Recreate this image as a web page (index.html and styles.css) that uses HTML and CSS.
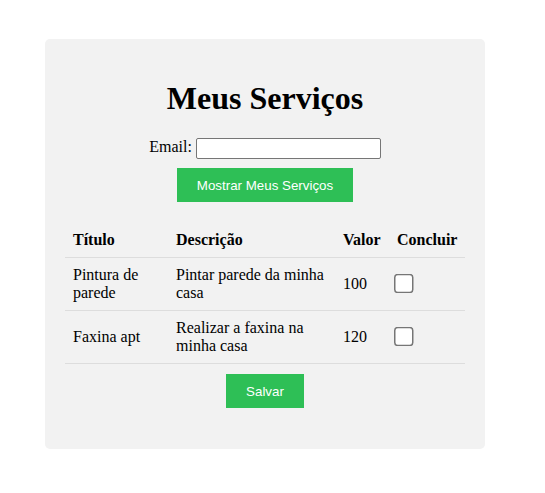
FILE: index.html
```html
<!DOCTYPE html>
<html lang="pt-BR">
<head>
  <meta charset="UTF-8">
  <meta name="viewport" content="width=device-width, initial-scale=1.0">
  <title>Meus Serviços</title>
  <link rel="stylesheet" href="styles.css">
</head>
<body>
  <div class="container">
    <h1>Meus Serviços</h1>
    <div class="email-row">
      <label for="email">Email:</label>
      <input type="email" id="email">
    </div>
    <div class="actions">
      <button>Mostrar Meus Serviços</button>
    </div>
    <table>
      <thead>
        <tr>
          <th class="col-titulo">Título</th>
          <th class="col-desc">Descrição</th>
          <th class="col-valor">Valor</th>
          <th class="col-concluir">Concluir</th>
        </tr>
      </thead>
      <tbody>
        <tr>
          <td>Pintura de parede</td>
          <td>Pintar parede da minha casa</td>
          <td>100</td>
          <td><input type="checkbox"></td>
        </tr>
        <tr>
          <td>Faxina apt</td>
          <td>Realizar a faxina na minha casa</td>
          <td>120</td>
          <td><input type="checkbox"></td>
        </tr>
      </tbody>
    </table>
    <div class="actions save">
      <button>Salvar</button>
    </div>
  </div>
</body>
</html>
```

FILE: styles.css
```css
body {
  font-family: "Liberation Serif", "Times New Roman", serif;
  margin: 0;
  padding: 39px 0 0 45px;
  background: #fff;
}
.container {
  width: 400px;
  padding: 20px 20px 41px;
  background-color: #f2f2f2;
  border-radius: 5px;
}
h1 {
  text-align: center;
  font-size: 32px;
  margin: 21px 0 19px;
}
.email-row {
  text-align: center;
  font-size: 16px;
  line-height: 22px;
}
.email-row input {
  width: 185px;
  height: 21px;
  box-sizing: border-box;
  border: 1px solid #767676;
  border-radius: 2px;
  padding: 1px 2px;
  vertical-align: middle;
  margin: 0;
}
.actions {
  text-align: center;
  margin-top: 9px;
}
.actions.save {
  margin-top: 10px;
}
button {
  font-family: "Liberation Sans", Arial, sans-serif;
  font-size: 13.33px;
  background-color: #2ebf56;
  color: white;
  border: none;
  padding: 10px 20px;
  height: 34px;
  cursor: pointer;
}
table {
  width: 400px;
  border-collapse: collapse;
  margin-top: 21px;
  table-layout: fixed;
}
th, td {
  text-align: left;
  padding: 8px;
  line-height: 18px;
  font-size: 16px;
  border-bottom: 1px solid #dddddd;
  vertical-align: middle;
}
.col-titulo { width: 87px; }
.col-desc { width: 151px; }
.col-valor { width: 38px; }
.col-concluir { width: 60px; }
td input[type="checkbox"] {
  width: 13px;
  height: 13px;
  margin: 0 0 0 -3px;
  vertical-align: middle;
  transform: translateY(-2px) scale(1.5);
  transform-origin: left center;
}
```
